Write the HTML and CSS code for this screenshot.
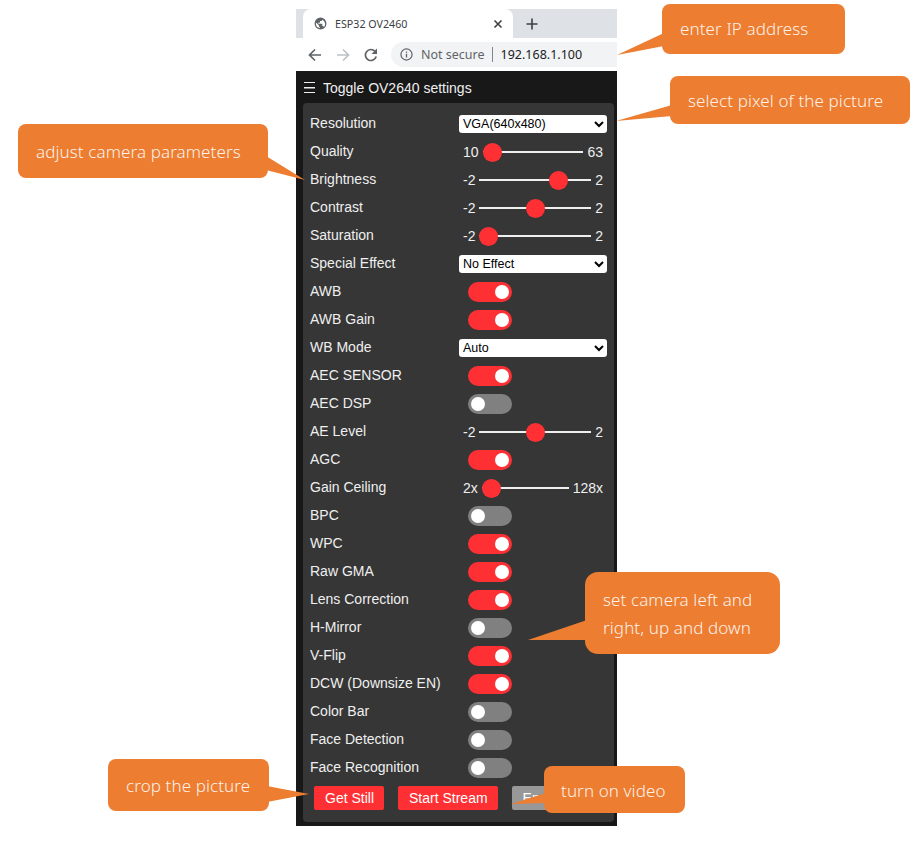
FILE: index.html
```html
<!DOCTYPE html>
<html lang="en">
<head>
    <meta charset="UTF-8">
    <title>ESP32 OV2460</title>
    <link rel="stylesheet" href="styles.css">
</head>
<body>
    <div class="phone">
        <div class="tabstrip">
            <div class="tab">
                <svg class="globe" width="13" height="13" viewBox="0 0 24 24"><path fill="#5f6368" d="M12 1a11 11 0 1 0 0 22 11 11 0 0 0 0-22zM3.500 12c0-.7.1-1.300.2-1.900L9 15.400v1.100c0 1.100.9 2 2 2v2a8.500 8.500 0 0 1-7.500-8.500zm14.700 5.800c-.3-.8-1-1.300-1.900-1.300h-1v-3c0-.6-.4-1-1-1H8v-2h2c.6 0 1-.4 1-1v-2h2c1.100 0 2-.9 2-2v-.4a8.500 8.500 0 0 1 3.200 13.700z"/></svg>
                <span class="tab-title">ESP32 OV2460</span>
                <svg class="tab-close" width="10" height="10" viewBox="0 0 10 10"><path d="M1.500 1.500l7 7M8.500 1.500l-7 7" stroke="#3c4043" stroke-width="1.600"/></svg>
            </div>
            <svg class="new-tab" width="12" height="12" viewBox="0 0 12 12"><path d="M6 .5v11M.5 6h11" stroke="#3c4043" stroke-width="1.600"/></svg>
        </div>
        <div class="toolbar">
            <svg class="nav-icon" width="16" height="16" viewBox="0 0 16 16"><path d="M14 8H2.500M8 2.500L2.500 8 8 13.500" fill="none" stroke="#5f6368" stroke-width="1.700"/></svg>
            <svg class="nav-icon" width="16" height="16" viewBox="0 0 16 16"><path d="M2 8h11.500M8 2.500L13.500 8 8 13.500" fill="none" stroke="#bdc1c6" stroke-width="1.700"/></svg>
            <svg class="nav-icon" width="16" height="16" viewBox="0 0 16 16"><path d="M13.200 9.500A5.500 5.500 0 1 1 12 4.300" fill="none" stroke="#5f6368" stroke-width="1.700"/><path d="M14 1.500V7H8.500z" fill="#5f6368"/></svg>
            <div class="omnibox">
                <svg width="13" height="13" viewBox="0 0 14 14"><circle cx="7" cy="7" r="6" fill="none" stroke="#5f6368" stroke-width="1.300"/><path d="M7 6.200v4M7 3.800v1.300" stroke="#5f6368" stroke-width="1.400"/></svg>
                <span class="not-secure">Not secure</span>
                <span class="url-sep"></span>
                <span class="url">192.168.1.100</span>
            </div>
        </div>
        <div class="page">
            <div class="toggle-line"><span class="burger"></span>Toggle OV2640 settings</div>
            <div class="settings">
                <div class="row"><div class="name">Resolution</div><select class="pick"><option>VGA(640x480)</option></select></div>
                <div class="row"><div class="name">Quality</div><div class="range-box">10<input type="range" min="10" max="63" value="10">63</div></div>
                <div class="row"><div class="name">Brightness</div><div class="range-box">-2<input type="range" min="-2" max="2" value="1">2</div></div>
                <div class="row"><div class="name">Contrast</div><div class="range-box">-2<input type="range" min="-2" max="2" value="0">2</div></div>
                <div class="row"><div class="name">Saturation</div><div class="range-box">-2<input type="range" min="-2" max="2" value="-2">2</div></div>
                <div class="row"><div class="name">Special Effect</div><select class="pick"><option>No Effect</option></select></div>
                <div class="row"><div class="name">AWB</div><div class="switch on"></div></div>
                <div class="row"><div class="name">AWB Gain</div><div class="switch on"></div></div>
                <div class="row"><div class="name">WB Mode</div><select class="pick"><option>Auto</option></select></div>
                <div class="row"><div class="name">AEC SENSOR</div><div class="switch on"></div></div>
                <div class="row"><div class="name">AEC DSP</div><div class="switch"></div></div>
                <div class="row"><div class="name">AE Level</div><div class="range-box">-2<input type="range" min="-2" max="2" value="0">2</div></div>
                <div class="row"><div class="name">AGC</div><div class="switch on"></div></div>
                <div class="row"><div class="name">Gain Ceiling</div><div class="range-box">2x<input type="range" min="0" max="6" value="0">128x</div></div>
                <div class="row"><div class="name">BPC</div><div class="switch"></div></div>
                <div class="row"><div class="name">WPC</div><div class="switch on"></div></div>
                <div class="row"><div class="name">Raw GMA</div><div class="switch on"></div></div>
                <div class="row"><div class="name">Lens Correction</div><div class="switch on"></div></div>
                <div class="row"><div class="name">H-Mirror</div><div class="switch"></div></div>
                <div class="row"><div class="name">V-Flip</div><div class="switch on"></div></div>
                <div class="row"><div class="name">DCW (Downsize EN)</div><div class="switch on"></div></div>
                <div class="row"><div class="name">Color Bar</div><div class="switch"></div></div>
                <div class="row"><div class="name">Face Detection</div><div class="switch"></div></div>
                <div class="row"><div class="name">Face Recognition</div><div class="switch"></div></div>
                <div class="buttons">
                    <button>Get Still</button>
                    <button>Start Stream</button>
                    <button class="off">Enroll Face</button>
                </div>
            </div>
        </div>
    </div>

    <!-- annotations on top of the screenshot -->
    <svg class="tails" width="924" height="848">
        <polygon points="664,33 664,46 617,55"/>
        <polygon points="672,105 672,116 616,121"/>
        <polygon points="266,156 266,170 305,180"/>
        <polygon points="587,620 587,640 528,640"/>
        <polygon points="267,786 267,802 309,794"/>
        <polygon points="546,793 546,803 511,804"/>
    </svg>
    <div class="note note-ip">enter IP address</div>
    <div class="note note-pixel">select pixel of the picture</div>
    <div class="note note-params">adjust camera parameters</div>
    <div class="note note-flip">set camera left and<br>right, up and down</div>
    <div class="note note-crop">crop the picture</div>
    <div class="note note-video">turn on video</div>
</body>
</html>
```

FILE: styles.css
```css
html, body {
    margin: 0;
    padding: 0;
    background-color: #ffffff;
}

body {
    position: relative;
    height: 848px;
    overflow: hidden;
    font-family: "Liberation Sans", Arial, sans-serif;
}

.phone {
    width: 321px;
    margin-left: 296px;
    padding-top: 9px;
}

/* browser chrome */
.tabstrip {
    display: flex;
    align-items: center;
    height: 29px;
    padding-left: 7px;
    background-color: #dee1e6;
}

.tab {
    display: flex;
    align-items: center;
    width: 210px;
    height: 29px;
    box-sizing: border-box;
    padding: 0 10px 0 11px;
    background-color: #ffffff;
    border-radius: 8px 8px 0 0;
}

.tab-title {
    flex: 1;
    margin-left: 8px;
    font-family: "Noto Sans", sans-serif;
    font-size: 10.700px;
    color: #3c4043;
}

.new-tab {
    margin-left: 13px;
}

.toolbar {
    display: flex;
    align-items: center;
    height: 33px;
    padding-left: 11px;
    background-color: #ffffff;
}

.nav-icon {
    margin-right: 12px;
}

.omnibox {
    display: flex;
    align-items: center;
    flex: 1;
    height: 25px;
    padding-left: 9px;
    background-color: #f1f3f4;
    border-radius: 13px 0 0 13px;
    font-family: "Noto Sans", sans-serif;
    font-size: 12.500px;
}

.not-secure {
    margin-left: 8px;
    color: #5f6368;
}

.url-sep {
    width: 1px;
    height: 15px;
    margin: 0 8px 0 7px;
    background-color: #80868b;
}

.url {
    color: #202124;
}

/* camera page */
.page {
    height: 755px;
    box-sizing: border-box;
    padding-right: 3px;
    padding-left: 7px;
    background-color: #181818;
}

.toggle-line {
    display: flex;
    align-items: center;
    height: 31px;
    margin-left: -7px;
    padding: 1px 0 0 8px;
    font-size: 14px;
    color: #efefef;
}

.burger {
    width: 11px;
    height: 9px;
    margin-right: 8px;
    border-top: 1.500px solid #efefef;
    border-bottom: 1.500px solid #efefef;
    background: linear-gradient(#efefef, #efefef) center / 100% 1.500px no-repeat;
}

.settings {
    height: 719px;
    box-sizing: border-box;
    padding: 7px 7px 0;
    background-color: #363636;
    border-radius: 4px;
}

.row {
    display: flex;
    align-items: center;
    height: 28px;
    font-size: 14px;
    color: #efefef;
}

.name {
    width: 149px;
    flex-shrink: 0;
    padding-bottom: 2px;
}

.pick {
    width: 148px;
    height: 18px;
    padding: 0;
    border: none;
    border-radius: 3px;
    background-color: #ffffff;
    font-family: "Liberation Sans", Arial, sans-serif;
    font-size: 12.500px;
    color: #000000;
}

.range-box {
    display: flex;
    align-items: center;
    width: 140px;
    padding: 0 4px;
}

.range-box input {
    flex: 1;
    min-width: 0;
    height: 22px;
    margin: 0 4px;
    background: transparent;
    -webkit-appearance: none;
    appearance: none;
}

.range-box input::-webkit-slider-runnable-track {
    height: 2px;
    background-color: #efefef;
}

.range-box input::-webkit-slider-thumb {
    -webkit-appearance: none;
    width: 19px;
    height: 19px;
    margin-top: -8.500px;
    border-radius: 50%;
    background-color: #ff3034;
}

.switch {
    display: flex;
    align-items: center;
    width: 44px;
    height: 20px;
    box-sizing: border-box;
    margin-left: 9px;
    padding: 0 3px;
    background-color: #808080;
    border-radius: 10px;
}

.switch::before {
    content: "";
    width: 14px;
    height: 14px;
    border-radius: 50%;
    background-color: #ffffff;
}

.switch.on {
    justify-content: flex-end;
    background-color: #ff3034;
}

.buttons {
    display: flex;
    gap: 14px;
    padding: 4px 0 0 4px;
}

button {
    height: 24px;
    padding: 0 10px 0 11px;
    border: none;
    border-radius: 2px;
    background-color: #ff3034;
    font-family: "Liberation Sans", Arial, sans-serif;
    font-size: 14px;
    color: #ffffff;
}

button.off {
    background-color: #989898;
}

/* orange callouts */
.tails {
    position: absolute;
    top: 0;
    left: 0;
}

.tails polygon {
    fill: #ed7d31;
}

.note {
    position: absolute;
    display: flex;
    align-items: center;
    box-sizing: border-box;
    padding-top: 2px;
    padding-left: 18px;
    background-color: #ed7d31;
    border-radius: 8px;
    font-family: "Noto Sans", sans-serif;
    font-size: 17px;
    font-weight: 300;
    letter-spacing: 0.100px;
    line-height: 28px;
    color: #fdf1e8;
}

.note-ip {
    top: 4px;
    left: 662px;
    width: 183px;
    height: 50px;
    padding-top: 0;
}

.note-pixel {
    top: 76px;
    left: 670px;
    width: 240px;
    height: 48px;
}

.note-params {
    top: 124px;
    left: 18px;
    width: 250px;
    height: 54px;
}

.note-flip {
    top: 572px;
    left: 585px;
    width: 195px;
    height: 82px;
    border-radius: 13px;
}

.note-crop {
    top: 759px;
    left: 108px;
    width: 161px;
    height: 52px;
}

.note-video {
    top: 766px;
    left: 544px;
    width: 141px;
    height: 47px;
    padding-left: 17px;
}
```
